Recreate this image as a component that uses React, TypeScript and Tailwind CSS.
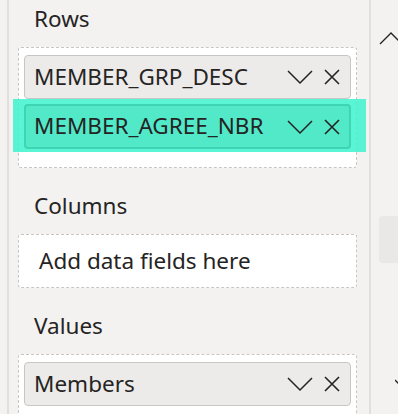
const ChevronDown = () => (
  <svg width="26" height="16" viewBox="0 0 26 16" className="shrink-0">
    <polyline points="1,2 13,14 25,2" fill="none" stroke="#252423" strokeWidth="1.5" />
  </svg>
);

const Close = () => (
  <svg width="18" height="18" viewBox="0 0 18 18" className="shrink-0">
    <path d="M2 2 L16 16 M16 2 L2 16" fill="none" stroke="#252423" strokeWidth="1.6" />
  </svg>
);

const FieldPill = ({ label, active }: { label: string; active?: boolean }) => (
  <div
    className={
      active
        ? 'relative z-10 flex h-[45px] items-center rounded-[4px] border-2 border-[#3fd4b2] bg-[#52e9c9] pl-[8px] pr-[8px]'
        : 'flex h-[44px] items-center rounded-[4px] border border-[#c8c6c4] bg-[#edebe9] pl-[9px] pr-[9px]'
    }
  >
    <span className="text-[22.5px] leading-none text-[#252423]">{label}</span>
    <div className="ml-auto flex items-center gap-[10px]">
      <ChevronDown />
      <Close />
    </div>
  </div>
);

const SectionLabel = ({ children }: { children: string }) => (
  <div className="h-[47px] pl-[16px] pt-[8px] text-[22.5px] leading-none text-[#252423]">{children}</div>
);

export default function App() {
  return (
    <div className="flex h-[414px] w-[398px] overflow-hidden bg-[#f3f2f1] font-['Noto_Sans',sans-serif]">
      <div className="w-[7px] shrink-0" />
      <div className="w-[2px] shrink-0 bg-[#e1dfdd]" />

      <div className="w-[360px] shrink-0 pl-[9px] pr-[12px]">
        <SectionLabel>Rows</SectionLabel>
        <div className="relative h-[121px] rounded-[3px] border border-dashed border-[#c8c6c4] bg-white px-[5px] pt-[7px]">
          <FieldPill label="MEMBER_GRP_DESC" />
          <div className="absolute left-[-6px] top-[51px] h-[53px] w-[353px] bg-[rgba(61,243,206,0.85)]" />
          <div className="mt-[5px]">
            <FieldPill label="MEMBER_AGREE_NBR" active />
          </div>
        </div>

        <div className="h-[19px]" />
        <SectionLabel>Columns</SectionLabel>
        <div className="flex h-[54px] items-center rounded-[3px] border border-dashed border-[#c8c6c4] bg-white pl-[20px]">
          <span className="text-[22.5px] leading-none text-[#252423]">Add data fields here</span>
        </div>

        <div className="h-[19px]" />
        <SectionLabel>Values</SectionLabel>
        <div className="h-[80px] rounded-[3px] border border-dashed border-[#c8c6c4] bg-white px-[5px] pt-[7px]">
          <FieldPill label="Members" />
        </div>
      </div>

      <div className="w-[2px] shrink-0 bg-[#e1dfdd]" />

      <div className="flex w-[27px] shrink-0 flex-col pl-[8px]">
        <svg width="24" height="14" viewBox="0 0 24 14" className="mt-[31px] shrink-0">
          <polyline points="1,13 12,2 23,13" fill="none" stroke="#252423" strokeWidth="1.4" />
        </svg>
        <div className="mt-[171px] h-[47px] w-[30px] shrink-0 rounded-[4px] bg-[#eae8e6]" />
        <svg width="24" height="14" viewBox="0 0 24 14" className="ml-[16px] mt-[116px] shrink-0">
          <polyline points="0,1 11,12 22,1" fill="none" stroke="#252423" strokeWidth="1.4" />
        </svg>
      </div>
    </div>
  );
}
